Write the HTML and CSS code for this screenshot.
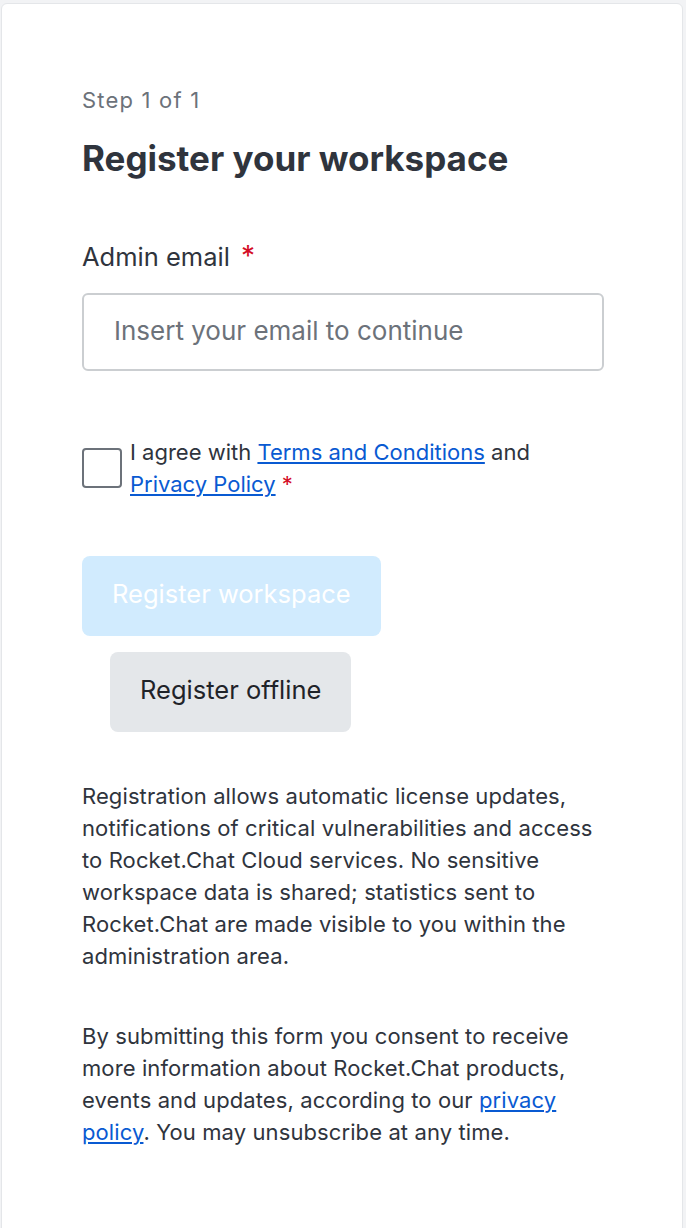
FILE: index.html
```html
<!DOCTYPE html>
<html lang="en">
<head>
<meta charset="utf-8">
<title>Register your workspace</title>
<link rel="stylesheet" href="styles.css">
</head>
<body>
<main class="card">
  <div class="step">Step 1 of 1</div>
  <h1 class="title">Register your workspace</h1>

  <form class="form">
    <label class="label" for="email">Admin email <span class="req">*</span></label>
    <input class="input" id="email" type="email" placeholder="Insert your email to continue">

    <div class="agree">
      <span class="checkbox"></span>
      <p class="agree-text">I agree with <a href="#" class="link">Terms and Conditions</a> and <a href="#" class="link">Privacy Policy</a> <span class="req">*</span></p>
    </div>

    <div class="actions">
      <button type="button" class="btn btn-primary" disabled>Register workspace</button>
      <button type="button" class="btn btn-secondary">Register offline</button>
    </div>
  </form>

  <p class="note">Registration allows automatic license updates, notifications of critical vulnerabilities and access to Rocket.Chat Cloud services. No sensitive workspace data is shared; statistics sent to Rocket.Chat are made visible to you within the administration area.</p>
  <p class="note">By submitting this form you consent to receive more information about Rocket.Chat products, events and updates, according to our <a href="#" class="link">privacy policy</a>. You may unsubscribe at any time.</p>
</main>
</body>
</html>
```
FILE: styles.css
```css
html, body {
  margin: 0;
  padding: 0;
}
body {
  background: #f2f3f5;
  font-family: Inter, "Noto Sans", sans-serif;
  color: #2f343d;
  padding: 3px 3px 0 1px;
  height: 1228px;
  box-sizing: border-box;
  overflow: hidden;
}
.card {
  background: #fff;
  border: 1px solid #e4e6e9;
  border-radius: 6px;
  height: 1240px;
  box-sizing: border-box;
  padding: 82px 78px 0 80px;
  display: flex;
  flex-direction: column;
}
.step {
  font-size: 22px;
  line-height: 28px;
  letter-spacing: 1.2px;
  color: #6c727a;
}
.title {
  margin: 22px 0 0;
  font-size: 35px;
  line-height: 44px;
  font-weight: 700;
  color: #2f343d;
}
.form {
  display: flex;
  flex-direction: column;
  margin: 61px 0 0;
}
.label {
  font-size: 25.5px;
  line-height: 32px;
  height: 32px;
}
.label .req {
  margin-left: 4px;
  font-size: 28px;
  line-height: 0;
}
.req {
  color: #d40c26;
}
.input {
  margin-top: 20px;
  height: 78px;
  box-sizing: border-box;
  border: 2px solid #cbced1;
  border-radius: 6px;
  padding: 0 0 4px 30px;
  font-family: inherit;
  font-size: 26px;
  color: #2f343d;
  outline: none;
}
.input::placeholder {
  color: #6c727a;
  opacity: 1;
}
.agree {
  margin-top: 65px;
  display: flex;
  gap: 8px;
  align-items: flex-start;
}
.checkbox {
  flex: none;
  margin-top: 12px;
  width: 40px;
  height: 40px;
  box-sizing: border-box;
  border: 2px solid #6c727a;
  border-radius: 4px;
}
.agree-text {
  margin: 0;
  font-size: 22px;
  line-height: 32px;
}
.link {
  color: #095ad2;
  text-decoration: underline;
  text-underline-offset: 2px;
  text-decoration-thickness: 2px;
}
.actions {
  margin-top: 56px;
  display: flex;
  flex-direction: column;
  align-items: flex-start;
  gap: 16px;
}
.btn {
  height: 80px;
  padding: 0 30px 5px;
  border: 0;
  border-radius: 8px;
  font-family: inherit;
  font-size: 25.5px;
  cursor: pointer;
}
.btn-primary {
  background: #d1ebfe;
  color: #fff;
}
.btn-secondary {
  background: #e4e7ea;
  color: #1f2329;
  margin-left: 28px;
}
.note {
  margin: 48px 0 0;
  font-size: 22px;
  line-height: 32px;
  letter-spacing: 0.1px;
}
```
